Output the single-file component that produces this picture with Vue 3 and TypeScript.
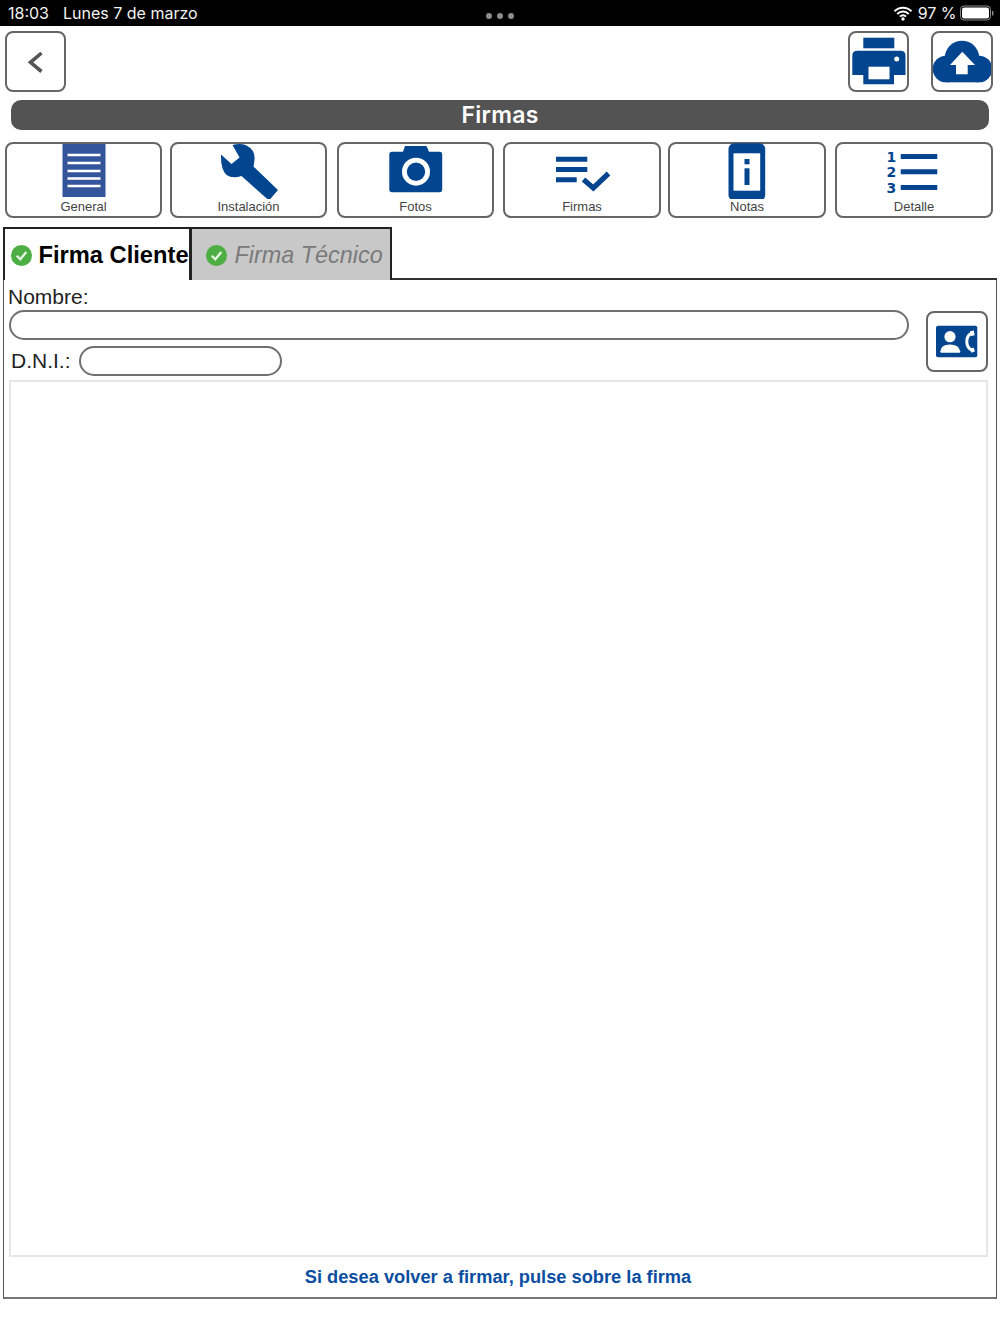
<script setup lang="ts">
const statusLeft: string = '18:03'
const dateText: string = 'Lunes 7 de marzo'
</script>

<template>
  <div class="page">
    <header class="status">
      <span class="clock">{{ statusLeft }}</span>
      <span class="date">{{ dateText }}</span>
      <div class="dots"><i></i><i></i><i></i></div>
      <div class="status-right">
        <svg class="wifi" width="20" height="16" viewBox="0 0 20 16">
          <path d="M1.5 6.2a12 12 0 0 1 17 0M4.3 9a8 8 0 0 1 11.4 0M7 11.6a4.2 4.2 0 0 1 6 0" fill="none" stroke="#fff" stroke-width="2"/>
          <circle cx="10" cy="14" r="1.7" fill="#fff"/>
        </svg>
        <span class="pct">97 %</span>
        <svg width="35" height="16" viewBox="0 0 35 16">
          <rect x="0.5" y="1" width="30" height="14" rx="3.5" fill="none" stroke="#8a8a8a"/>
          <rect x="2" y="2.5" width="27" height="11" rx="2.2" fill="#fff"/>
          <rect x="32" y="6" width="1.4" height="4.5" fill="#8a8a8a"/>
        </svg>
      </div>
    </header>

    <div class="topbar">
      <button class="sq">
        <svg width="57" height="57" viewBox="7 33 57 57">
          <path d="M41.5 53 30.5 62.3 41.5 71.5" fill="none" stroke="#555" stroke-width="3.6"/>
        </svg>
      </button>
      <button class="sq sq-print">
        <svg width="57" height="57" viewBox="850 33 57 57">
          <rect x="863.3" y="37.7" width="31" height="10.6" fill="#03468f"/>
          <path d="M857 50.7h43.5q5 0 5 5V75h-11.500v9.300H863.300V75h-11v-19.300q0-5 5-5z" fill="#03468f"/>
          <rect x="868.500" y="66.700" width="21" height="12.600" fill="#fff"/>
          <circle cx="896.700" cy="59" r="2.500" fill="#fff"/>
        </svg>
      </button>
      <button class="sq sq-cloud">
        <svg width="58" height="57" viewBox="933 33 58 57">
          <g fill="#03468f">
            <circle cx="946" cy="69" r="13.300"/>
            <circle cx="962" cy="58" r="17.300"/>
            <circle cx="979" cy="69" r="13.300"/>
            <rect x="946" y="62" width="33" height="20.300"/>
          </g>
          <path d="M962.300 51.700 975 65h-7.300v9.300H956V65h-6z" fill="#fff"/>
        </svg>
      </button>
    </div>

    <h1 class="title">Firmas</h1>

    <nav class="tools">
      <button class="tool">
        <svg class="ico" viewBox="53.500 143 60 56">
          <rect x="62" y="144" width="43" height="53" fill="#33559b"/>
          <path d="M67 155h33M67 163h33M67 171h33M67 178.500h33M67 186h33" stroke="#fff" stroke-width="2.600"/>
        </svg>
        <span>General</span>
      </button>
      <button class="tool">
        <svg class="ico" viewBox="218.500 143 60 56">
          <path d="M232 145 Q240 143 246 145.500 Q255 150 254 160 L253 166.500 L277.500 190 L268.500 200.500 L241 176 Q232 179 226 175 Q220 169 220.500 154.500 L231 164 L239 157.500 Z" fill="#03468f"/>
        </svg>
        <span>Instalación</span>
      </button>
      <button class="tool">
        <svg class="ico" viewBox="386 143 60 56">
          <path d="M392 151.700h11l2-5.700h21.500l2.500 5.700h10.500q2.700 0 2.700 2.700V189.600q0 2.700-2.700 2.700H392q-2.700 0-2.700-2.700V154.400q0-2.700 2.700-2.700z" fill="#03468f"/>
          <circle cx="416" cy="171.700" r="11.600" fill="none" stroke="#fff" stroke-width="4.800"/>
        </svg>
        <span>Fotos</span>
      </button>
      <button class="tool">
        <svg class="ico" viewBox="552 143 60 56">
          <path d="M556 159.200h31.300M556 169.500h31.300M556 179.800h20.700" stroke="#03468f" stroke-width="5" fill="none"/>
          <path d="M583.500 179.500 593.300 188 608.500 173.500" stroke="#03468f" stroke-width="5.200" fill="none"/>
        </svg>
        <span>Firmas</span>
      </button>
      <button class="tool">
        <svg class="ico" viewBox="717.500 143 60 56">
          <rect x="729" y="143.300" width="36.700" height="57.400" rx="5.500" fill="#03468f"/>
          <rect x="734" y="153.300" width="26.700" height="37.400" fill="#fff"/>
          <rect x="745" y="159" width="5" height="5.300" fill="#03468f"/>
          <rect x="745" y="168.300" width="5" height="16.700" fill="#03468f"/>
        </svg>
        <span>Notas</span>
      </button>
      <button class="tool">
        <svg class="ico" viewBox="884 143 60 56">
          <path d="M900.700 156.500h36.600M900.700 171.800h36.600M900.700 187.500h36.600" stroke="#03468f" stroke-width="5" fill="none"/>
          <text x="891.300" y="161.700" class="num">1</text>
          <text x="891.300" y="177" class="num">2</text>
          <text x="891.300" y="192.500" class="num">3</text>
        </svg>
        <span>Detalle</span>
      </button>
    </nav>

    <div class="tabs">
      <div class="tab tab-on">
        <svg class="check" width="21" height="21" viewBox="0 0 21 21">
          <circle cx="10.500" cy="10.500" r="10.500" fill="#4cae43"/>
          <path d="M5.800 10.800 9.300 14.300 15.300 7" fill="none" stroke="#e8f5e6" stroke-width="2.300"/>
        </svg>
        <span>Firma Cliente</span>
      </div>
      <div class="tab tab-off">
        <svg class="check" width="21" height="21" viewBox="0 0 21 21">
          <circle cx="10.500" cy="10.500" r="10.500" fill="#4cae43"/>
          <path d="M5.800 10.800 9.300 14.300 15.300 7" fill="none" stroke="#e8f5e6" stroke-width="2.300"/>
        </svg>
        <span>Firma Técnico</span>
      </div>
      <div class="tab-rest"></div>
    </div>

    <section class="panel">
      <div class="form">
        <div class="fields">
          <label class="lbl-name">Nombre:</label>
          <div class="input input-name"></div>
          <div class="dni-row">
            <label class="lbl-dni">D.N.I.:</label>
            <div class="input input-dni"></div>
          </div>
        </div>
        <button class="sq sq-contact">
          <svg width="58" height="57" viewBox="928 313 58 57">
            <rect x="936" y="325.700" width="41.300" height="31.600" rx="2" fill="#03468f"/>
            <circle cx="950" cy="336.700" r="5.600" fill="#fff"/>
            <path d="M940.300 351.500q.5-7 9.700-7t10.300 7q0 1.300-1.300 1.300h-17.400q-1.300 0-1.300-1.300z" fill="#fff"/>
            <path d="M972.300 333q-5.500 2-5.500 8.500t5.500 8.800" fill="none" stroke="#fff" stroke-width="3"/>
            <path d="M970 331.200l3.800-.6.900 4.600-3.600.9zM970 349l3.600-1.500 1.400 3.800-3.600 1.400z" fill="#fff"/>
          </svg>
        </button>
      </div>
      <div class="sign"></div>
      <p class="hint">Si desea volver a firmar, pulse sobre la firma</p>
    </section>
  </div>
</template>

<style scoped>
.page {
  width: 1000px;
  height: 1334px;
  background: #fff;
  overflow: hidden;
  font-family: "Liberation Sans", Arial, sans-serif;
}
.status {
  height: 26px;
  background: #000;
  color: #f2f2f2;
  display: flex;
  align-items: center;
  padding: 0 5.500px 0 8px;
  font-family: Inter, "Liberation Sans", sans-serif;
  font-size: 16px;
  position: relative;
}
.date { margin-left: 14px; }
.dots {
  position: absolute;
  left: 486px;
  top: 13px;
  display: flex;
  gap: 5px;
}
.dots i {
  width: 6px;
  height: 6px;
  border-radius: 50%;
  background: #8c8c8c;
}
.status-right {
  margin-left: auto;
  display: flex;
  align-items: center;
  gap: 3px;
}
.wifi { display: block; margin-right: 1.500px; }
.topbar {
  display: flex;
  padding: 5px 7px 0 5px;
}
.sq {
  box-sizing: border-box;
  width: 61px;
  height: 61px;
  padding: 0;
  background: #fff;
  border: 2px solid #666;
  border-radius: 8px;
  display: flex;
  align-items: center;
  justify-content: center;
  overflow: hidden;
}
.sq svg { display: block; flex: none; }
.sq-print { margin-left: auto; }
.sq-cloud { margin-left: 22px; width: 62px; }
.title {
  margin: 8px 11px 0;
  height: 30px;
  line-height: 30px;
  background: #535353;
  border-radius: 10px;
  color: #fff;
  text-align: center;
  font-family: Inter, "Liberation Sans", sans-serif;
  font-weight: 600;
  font-size: 23px;
  letter-spacing: 0.300px;
}
.tools {
  display: flex;
  margin: 12px 0 0 5px;
}
.tool {
  box-sizing: border-box;
  width: 157px;
  height: 76px;
  padding: 0;
  background: #fff;
  border: 2px solid #666;
  border-radius: 8px;
  display: flex;
  flex-direction: column;
  align-items: center;
  font-family: "Liberation Sans", Arial, sans-serif;
  font-size: 13px;
  color: #444;
}
.tool:nth-child(2) { margin-left: 8px; }
.tool:nth-child(3) { margin-left: 10px; }
.tool:nth-child(4) { margin-left: 9px; width: 158px; }
.tool:nth-child(5) { margin-left: 7px; width: 158px; }
.tool:nth-child(6) { margin-left: 9px; width: 158px; }
.ico {
  display: block;
  width: 60px;
  height: 56px;
  margin-top: -1px;
  flex: none;
}
.tool span { line-height: 16px; }
.num {
  font-family: "DejaVu Sans", sans-serif;
  font-weight: 700;
  font-size: 14px;
  text-anchor: middle;
  fill: #03468f;
}
.tabs {
  display: flex;
  margin: 9px 3px 0;
  height: 53px;
  box-sizing: border-box;
}
.tab {
  box-sizing: border-box;
  height: 53px;
  display: flex;
  align-items: center;
  padding-top: 2px;
  white-space: nowrap;
}
.tab-on {
  width: 189px;
  border-top: 2px solid #222;
  border-left: 2px solid #222;
  border-right: 3px solid #222;
  font-weight: 700;
  font-size: 23.700px;
  color: #000;
  padding-left: 6px;
}
.tab-off {
  width: 200px;
  background: #c8c8c8;
  border-top: 2px solid #222;
  border-right: 2px solid #222;
  font-style: italic;
  font-size: 23.400px;
  color: #7a7a7a;
  padding-left: 13.500px;
}
.check { flex: none; margin-right: 6.500px; }
.tab-off .check { margin-right: 8px; }
.tab-rest {
  flex: 1;
  border-bottom: 2px solid #333;
}
.panel {
  box-sizing: border-box;
  margin: 0 3px;
  height: 1019px;
  border-left: 1px solid #555;
  border-right: 1px solid #555;
  border-bottom: 2px solid #777;
}
.form {
  display: flex;
  align-items: flex-start;
  height: 100px;
}
.fields { width: 917px; flex: none; }
.lbl-name {
  display: block;
  margin-left: 4px;
  height: 30px;
  line-height: 34px;
  font-size: 21px;
  color: #222;
}
.input {
  box-sizing: border-box;
  background: #fff;
  border: 2px solid #707070;
  border-radius: 15px;
  height: 30px;
}
.input-name { margin-left: 5px; width: 900px; }
.dni-row {
  display: flex;
  align-items: center;
  margin-top: 6px;
  padding-left: 7px;
}
.lbl-dni { font-size: 21px; color: #222; width: 68px; }
.input-dni { width: 203px; }
.sq-contact { margin-top: 31px; margin-left: 5px; width: 62px; }
.sign {
  box-sizing: border-box;
  margin-left: 5px;
  width: 979px;
  height: 877px;
  border: 2px solid #e6e6e6;
}
.hint {
  margin: 0;
  height: 40px;
  line-height: 40px;
  text-align: center;
  padding-right: 4px;
  font-size: 18.250px;
  font-weight: 700;
  color: #0a4ea2;
}
</style>
